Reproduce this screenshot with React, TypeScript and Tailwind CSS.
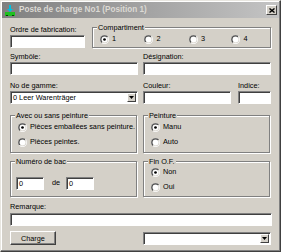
import React from "react";

const font = { fontFamily: '"Liberation Sans", Arial, sans-serif' };

function Radio({ checked }: { checked?: boolean }) {
  return (
    <svg width="9" height="9" viewBox="0 0 12 12" className="shrink-0">
      <defs>
        <linearGradient id="rg-outer" x1="0" y1="0" x2="1" y2="1">
          <stop offset="50%" stopColor="#808080" />
          <stop offset="50%" stopColor="#ffffff" />
        </linearGradient>
        <linearGradient id="rg-inner" x1="0" y1="0" x2="1" y2="1">
          <stop offset="50%" stopColor="#404040" />
          <stop offset="50%" stopColor="#d4d0c8" />
        </linearGradient>
      </defs>
      <circle cx="6" cy="6" r="6" fill="url(#rg-outer)" />
      <circle cx="6" cy="6" r="5" fill="url(#rg-inner)" />
      <circle cx="6" cy="6" r="4" fill="#ffffff" />
      {checked && <circle cx="6" cy="6" r="1.8" fill="#000000" />}
    </svg>
  );
}

function RadioItem({ label, checked }: { label: string; checked?: boolean }) {
  return (
    <div className="flex items-center gap-[3px] h-[10px] leading-[10px]">
      <Radio checked={checked} />
      <span>{label}</span>
    </div>
  );
}

function Input({ className = "", value = "" }: { className?: string; value?: string }) {
  return (
    <div
      className={
        "bg-white border border-t-[#808080] border-l-[#808080] border-r-white border-b-white shadow-[inset_1px_1px_0_#404040] h-[13px] leading-[11px] pl-[2px] " +
        className
      }
    >
      {value}
    </div>
  );
}

function DropButton() {
  return (
    <div className="w-[9px] h-[9px] bg-[#d4d0c8] border border-t-white border-l-white border-r-[#404040] border-b-[#404040] flex items-center justify-center">
      <svg width="5" height="3" viewBox="0 0 5 3">
        <path d="M0 0 L5 0 L2.5 3 Z" fill="#000" />
      </svg>
    </div>
  );
}

function Combo({ className = "", value = "" }: { className?: string; value?: string }) {
  return (
    <div
      className={
        "bg-white border border-t-[#808080] border-l-[#808080] border-r-white border-b-white shadow-[inset_1px_1px_0_#404040] h-[13px] flex items-center justify-between pl-[2px] pr-[1px] " +
        className
      }
    >
      <span className="leading-[11px]">{value}</span>
      <DropButton />
    </div>
  );
}

function Group({
  title,
  className = "",
  children,
}: {
  title: string;
  className?: string;
  children?: React.ReactNode;
}) {
  return (
    <div
      className={
        "relative border border-[#808080] shadow-[1px_1px_0_#fff,inset_1px_1px_0_#fff] " + className
      }
    >
      <span className="absolute -top-[5px] left-[4px] bg-[#d4d0c8] px-[1px] leading-[9px]">{title}</span>
      {children}
    </div>
  );
}

export default function App() {
  return (
    <div
      className="w-[281px] h-[252px] bg-[#d4d0c8] text-black text-[7.3px] border border-t-[#e8e6e0] border-l-[#e8e6e0] border-r-[#404040] border-b-[#404040] shadow-[inset_-1px_-1px_0_#808080,inset_1px_1px_0_#fff] overflow-hidden"
      style={font}
    >
      {/* Title bar */}
      <div className="mx-[1px] mt-[1px] h-[16px] bg-gradient-to-r from-[#808080] to-[#c4c4c4] flex items-center pl-[3px] pr-[2px]">
        <svg width="10" height="11" viewBox="0 0 10 11" className="shrink-0">
          <rect x="4" y="0" width="2" height="4" fill="#00c0e0" />
          <path d="M2 4 L8 4 L5 7 Z" fill="#00c0e0" />
          <rect x="0" y="7" width="10" height="4" fill="#20c020" />
          <rect x="1" y="10" width="2" height="1" fill="#004000" />
          <rect x="7" y="10" width="2" height="1" fill="#004000" />
        </svg>
        <span className="ml-[4px] font-bold text-[8.2px] text-[#dcdad4] leading-[16px] whitespace-nowrap">
          Poste de charge No1 (Position 1)
        </span>
        <div className="ml-auto w-[11px] h-[10px] bg-[#d4d0c8] border border-t-white border-l-white border-r-[#404040] border-b-[#404040] flex items-center justify-center">
          <svg width="6" height="5" viewBox="0 0 6 5">
            <path d="M0.5 0.5 L5.5 4.5 M5.5 0.5 L0.5 4.5" stroke="#000" strokeWidth="1.4" />
          </svg>
        </div>
      </div>

      <div className="px-[9px]">
        {/* Row 1 */}
        <div className="flex mt-[7px] h-[23px]">
          <div className="w-[76px]">
            <div className="h-[10px] leading-[10px]">Ordre de fabrication:</div>
            <Input />
          </div>
          <Group title="Compartiment" className="ml-[7px] mt-[2px] h-[21px] w-[179px]">
            <div className="flex pt-[6px] pl-[7px]">
              <div className="w-[46px]"><RadioItem label="1" checked /></div>
              <div className="w-[46px]"><RadioItem label="2" /></div>
              <div className="w-[44px]"><RadioItem label="3" /></div>
              <div className="w-[40px]"><RadioItem label="4" /></div>
            </div>
          </Group>
        </div>

        {/* Row 2 */}
        <div className="flex gap-[5px] mt-[4px]">
          <div className="w-[128px]">
            <div className="h-[10px] leading-[10px]">Symbôle:</div>
            <Input />
          </div>
          <div className="w-[128px]">
            <div className="h-[10px] leading-[10px]">Désignation:</div>
            <Input />
          </div>
        </div>

        {/* Row 3 */}
        <div className="flex mt-[6px]">
          <div className="w-[128px]">
            <div className="h-[10px] leading-[10px]">No de gamme:</div>
            <Combo value="0 Leer Warenträger" />
          </div>
          <div className="w-[88px] ml-[5px]">
            <div className="h-[10px] leading-[10px]">Couleur:</div>
            <Input />
          </div>
          <div className="w-[33px] ml-[7px]">
            <div className="h-[10px] leading-[10px]">Indice:</div>
            <Input />
          </div>
        </div>

        {/* Row 4 */}
        <div className="flex gap-[6px] mt-[11px]">
          <Group title="Avec ou sans peinture" className="w-[127px] h-[38px]">
            <div className="flex flex-col gap-[5px] pt-[6px] pl-[7px]">
              <RadioItem label="Pièces emballées sans peinture." checked />
              <RadioItem label="Pièces peintes." />
            </div>
          </Group>
          <Group title="Peinture" className="w-[127px] h-[38px]">
            <div className="flex flex-col gap-[5px] pt-[6px] pl-[7px]">
              <RadioItem label="Manu" checked />
              <RadioItem label="Auto" />
            </div>
          </Group>
        </div>

        {/* Row 5 */}
        <div className="flex gap-[6px] mt-[8px]">
          <Group title="Numéro de bac" className="w-[127px] h-[36px]">
            <div className="flex items-center pt-[15px] pl-[5px]">
              <Input className="w-[28px]" value="0" />
              <span className="ml-[8px] w-[14px]">de</span>
              <Input className="w-[28px]" value="0" />
            </div>
          </Group>
          <Group title="Fin O.F." className="w-[127px] h-[36px]">
            <div className="flex flex-col gap-[5px] pt-[5px] pl-[7px]">
              <RadioItem label="Non" checked />
              <RadioItem label="Oui" />
            </div>
          </Group>
        </div>

        {/* Row 6 */}
        <div className="mt-[5px]">
          <div className="h-[10px] leading-[10px]">Remarque:</div>
          <Input className="mt-[1px] w-[262px]" />
        </div>

        {/* Row 7 */}
        <div className="flex items-start mt-[5px]">
          <button className="w-[46px] h-[14px] bg-[#d4d0c8] border border-t-white border-l-white border-r-[#404040] border-b-[#404040] shadow-[inset_-1px_-1px_0_#808080] leading-[11px] text-center">
            Charge
          </button>
          <Combo className="ml-[87px] mt-[1px] w-[129px]" />
        </div>
      </div>
    </div>
  );
}
